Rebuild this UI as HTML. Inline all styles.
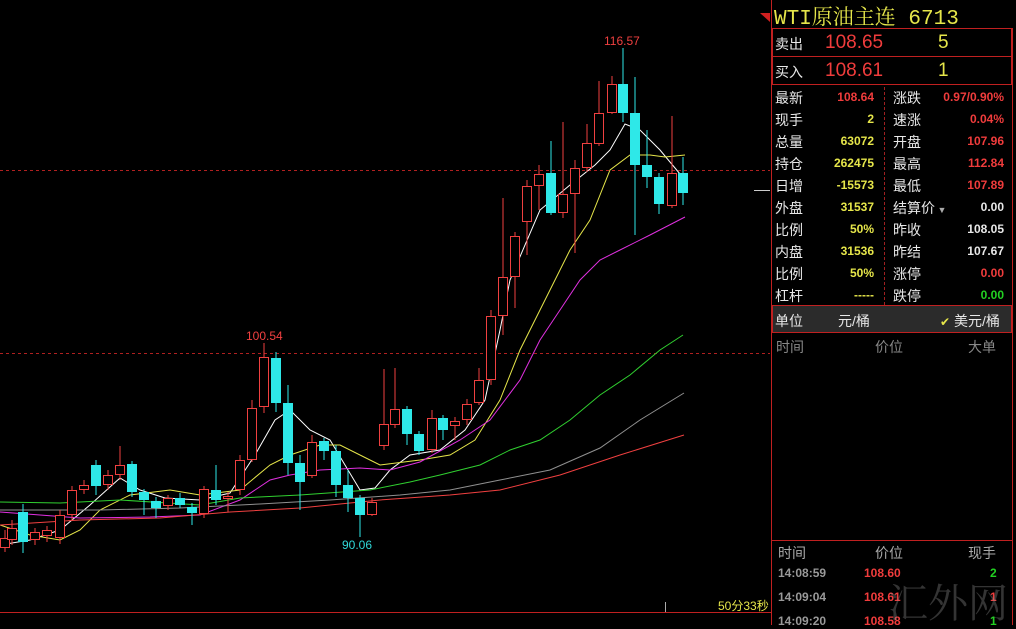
<!DOCTYPE html>
<html><head><meta charset="utf-8"><style>
*{margin:0;padding:0;box-sizing:border-box}
body{width:1016px;height:625px;background:#000;overflow:hidden;position:relative;font-family:"Liberation Sans","Noto Sans CJK SC",sans-serif}
.t{position:absolute;white-space:nowrap}
.cn{font-family:"Liberation Sans","Noto Sans CJK SC",sans-serif;color:#e8e8e8;font-size:14px}
.r{color:#f03c3c}.y{color:#e6e64a}.w{color:#e8e8e8}.g{color:#22d022}.gr{color:#888}
.num{font-weight:bold;font-size:12px;text-align:right}
</style></head><body>
<svg width="1016" height="625" style="position:absolute;left:0;top:0">
<g stroke="#b02020" stroke-dasharray="3,3" stroke-width="1">
<line x1="0" y1="170.5" x2="770" y2="170.5"/><line x1="0" y1="353.5" x2="770" y2="353.5"/>
</g>
<line x1="0" y1="612.5" x2="772" y2="612.5" stroke="#c02020"/>
<line x1="771.5" y1="0" x2="771.5" y2="625" stroke="#c02020"/>
<line x1="754" y1="190.5" x2="770" y2="190.5" stroke="#ccc"/>
<line x1="665.5" y1="602" x2="665.5" y2="612" stroke="#aaa"/>
<polygon points="760,13 770,13 770,22" fill="#d02020"/>
<g fill="none" stroke-width="1">
<polyline stroke="#ffffff" points="0,545 30,540 60,530 90,505 120,478 140,490 165,498 200,500 230,493 255,455 275,420 290,410 310,430 330,440 360,490 375,488 390,470 410,455 440,450 465,430 485,400 500,330 510,280 540,210 570,185 595,165 610,150 625,124 640,130 660,150 685,180"/>
<polyline stroke="#e6e64a" points="0,525 30,535 60,540 80,530 100,510 130,495 170,490 200,495 240,490 270,465 290,455 320,445 340,445 370,460 380,465 420,460 450,455 475,440 500,400 520,350 550,290 570,250 590,220 610,170 630,155 650,155 665,157 685,155"/>
<polyline stroke="#e030e0" points="0,512 40,515 80,518 150,517 200,515 240,500 270,480 290,475 320,470 360,468 390,470 420,462 460,440 490,420 520,380 540,340 560,310 580,280 600,260 620,250 650,235 685,217"/>
<polyline stroke="#30d030" points="0,502 60,503 120,500 200,505 240,498 300,495 370,490 410,482 440,475 480,465 510,450 540,440 570,420 600,395 630,375 660,350 683,335"/>
<polyline stroke="#909090" points="0,510 100,510 180,508 260,504 330,500 400,495 450,490 500,480 550,470 600,448 640,420 684,393"/>
<polyline stroke="#f04040" points="0,525 80,520 160,518 230,512 300,508 380,500 450,495 500,490 560,475 620,455 684,435"/>
</g>
<g id="c"></g>
<text x="246" y="340" fill="#f04040" font-size="12" font-family="Liberation Sans">100.54</text>
<text x="604" y="45" fill="#f04040" font-size="12" font-family="Liberation Sans">116.57</text>
<text x="342" y="549" fill="#30d8d8" font-size="12" font-family="Liberation Sans">90.06</text>
</svg>
<script>
var d=[
[0,538,548,530,552,1],[7,528,540,520,545,1],[18,512,542,504,553,0],[30,532,540,528,545,1],[42,530,536,526,542,1],
[55,515,538,510,544,1],[67,490,515,486,520,1],[79,485,490,480,494,1],[91,465,486,460,495,0],[103,475,485,470,490,1],
[115,465,475,446,480,1],[127,464,492,461,497,0],[139,492,500,489,515,0],[151,501,508,497,518,0],[163,498,506,495,510,1],
[175,498,505,493,508,0],[187,507,513,503,525,0],[199,489,514,486,518,1],[211,490,500,465,505,0],[223,496,499,492,512,1],
[235,460,490,455,495,1],[247,408,460,400,462,1],[259,357,407,343,413,1],[271,358,403,352,412,0],[283,403,463,385,475,0],
[295,463,482,455,510,0],[307,442,476,435,478,1],[319,441,451,438,460,0],[331,451,485,445,497,0],[343,485,498,470,512,0],
[355,498,515,495,537,0],[367,502,515,498,516,1],[379,424,446,369,450,1],[390,409,425,368,428,1],[402,409,434,406,445,0],
[414,434,451,431,455,0],[427,418,450,410,453,1],[438,418,430,415,440,0],[450,421,426,417,440,1],[462,404,420,399,425,1],
[474,380,403,368,405,1],[486,316,380,310,385,1],[498,277,316,198,335,1],[510,236,277,232,308,1],[522,186,222,180,255,1],
[534,174,186,165,210,1],[546,173,213,141,215,0],[558,194,213,122,218,1],[570,168,194,160,253,1],[582,143,168,124,172,1],
[594,113,144,81,146,1],[607,84,113,76,114,1],[618,84,113,48,122,0],[630,113,165,77,235,0],[642,165,177,130,188,0],
[654,177,204,173,214,0],[667,173,206,116,208,1],[678,173,193,157,205,0]];
var s='';d.forEach(function(c){var x=c[0],w=10,m=x+w/2;var col=c[5]?'#f04040':'#2ee8e8';
s+='<line x1="'+m+'" y1="'+c[3]+'" x2="'+m+'" y2="'+c[4]+'" stroke="'+col+'"/>';
if(c[5])s+='<rect x="'+(x+.5)+'" y="'+(c[1]+.5)+'" width="'+(w-1)+'" height="'+Math.max(1,c[2]-c[1]-1)+'" fill="#000" stroke="'+col+'"/>';
else s+='<rect x="'+x+'" y="'+c[1]+'" width="'+w+'" height="'+Math.max(1,c[2]-c[1])+'" fill="'+col+'"/>';});
document.getElementById('c').innerHTML=s;
</script>
<div class="t" style="left:718px;top:597px;font-size:12px;color:#e6e64a">50分33秒</div>

<div class="t y" style="left:774px;top:1px;font-size:21px;font-family:'Liberation Mono','Noto Serif CJK SC',monospace">WTI原油主连 6713</div>
<div style="position:absolute;left:772px;top:28px;width:240px;height:57px;border:1px solid #c02020"></div>
<div style="position:absolute;left:772px;top:56px;width:240px;height:1px;background:#c02020"></div>
<div class="t cn" style="left:775px;top:34px">卖出</div>
<div class="t r" style="left:825px;top:32px;font-size:19px">108.65</div>
<div class="t y" style="left:938px;top:32px;font-size:19px">5</div>
<div class="t cn" style="left:775px;top:62px">买入</div>
<div class="t r" style="left:825px;top:60px;font-size:19px">108.61</div>
<div class="t y" style="left:938px;top:60px;font-size:19px">1</div>
<div style="position:absolute;left:884px;top:87px;height:218px;border-left:1px dashed #a02020"></div>
<div style="position:absolute;left:772px;top:305px;width:240px;height:28px;border:1px solid #c02020;background:#2b2b2b"></div>
<div class="t cn" style="left:775px;top:311px">单位</div>
<div class="t cn" style="left:838px;top:311px">元/桶</div>
<div class="t cn" style="left:940px;top:311px"><span class="y" style="font-size:12px">✔</span> 美元/桶</div>
<div class="t cn gr" style="left:776px;top:337px;color:#888">时间</div>
<div class="t cn" style="left:875px;top:337px;color:#888">价位</div>
<div class="t cn" style="left:968px;top:337px;color:#888">大单</div>
<div style="position:absolute;left:772px;top:540px;width:240px;height:1px;background:#c02020"></div>
<div style="position:absolute;left:1012px;top:28px;width:1px;height:597px;background:#c02020"></div>
<div class="t cn" style="left:778px;top:543px;color:#aaa">时间</div>
<div class="t cn" style="left:875px;top:543px;color:#aaa">价位</div>
<div class="t cn" style="left:968px;top:543px;color:#aaa">现手</div>
<div class="t" style="left:778px;top:566px;font-size:12px;font-weight:bold;color:#999">14:08:59</div>
<div class="t r" style="left:864px;top:566px;font-size:12px;font-weight:bold">108.60</div>
<div class="t g" style="left:990px;top:566px;font-size:12px;font-weight:bold">2</div>
<div class="t" style="left:778px;top:590px;font-size:12px;font-weight:bold;color:#999">14:09:04</div>
<div class="t r" style="left:864px;top:590px;font-size:12px;font-weight:bold">108.61</div>
<div class="t r" style="left:990px;top:590px;font-size:12px;font-weight:bold">1</div>
<div class="t" style="left:778px;top:614px;font-size:12px;font-weight:bold;color:#999">14:09:20</div>
<div class="t r" style="left:864px;top:614px;font-size:12px;font-weight:bold">108.58</div>
<div class="t g" style="left:990px;top:614px;font-size:12px;font-weight:bold">1</div>
<div class="t" style="left:888px;top:572px;font-size:40px;color:rgba(150,150,150,.35);font-family:'Noto Serif CJK SC',serif">汇外网</div>

<div id="rows"></div>
<script>
var R=[["最新","108.64","r","涨跌","0.97/0.90%","r"],["现手","2","y","速涨","0.04%","r"],["总量","63072","y","开盘","107.96","r"],
["持仓","262475","y","最高","112.84","r"],["日增","-15573","y","最低","107.89","r"],["外盘","31537","y","结算价<span style=\"font-size:9px;color:#aaa\"> ▼</span>","0.00","w"],
["比例","50%","y","昨收","108.05","w"],["内盘","31536","y","昨结","107.67","w"],["比例","50%","y","涨停","0.00","r"],["杠杆","-----","y","跌停","0.00","g"]];
var h='';R.forEach(function(r,i){var y=88+i*22;
h+='<div class="t cn" style="left:775px;top:'+y+'px">'+r[0]+'</div>';
h+='<div class="t num '+r[2]+'" style="right:142px;top:'+(y+2)+'px">'+r[1]+'</div>';
h+='<div class="t cn" style="left:893px;top:'+y+'px">'+r[3]+'</div>';
h+='<div class="t num '+r[5]+'" style="right:12px;top:'+(y+2)+'px">'+r[4]+'</div>';});
document.getElementById('rows').innerHTML=h;
</script>
</body></html>
